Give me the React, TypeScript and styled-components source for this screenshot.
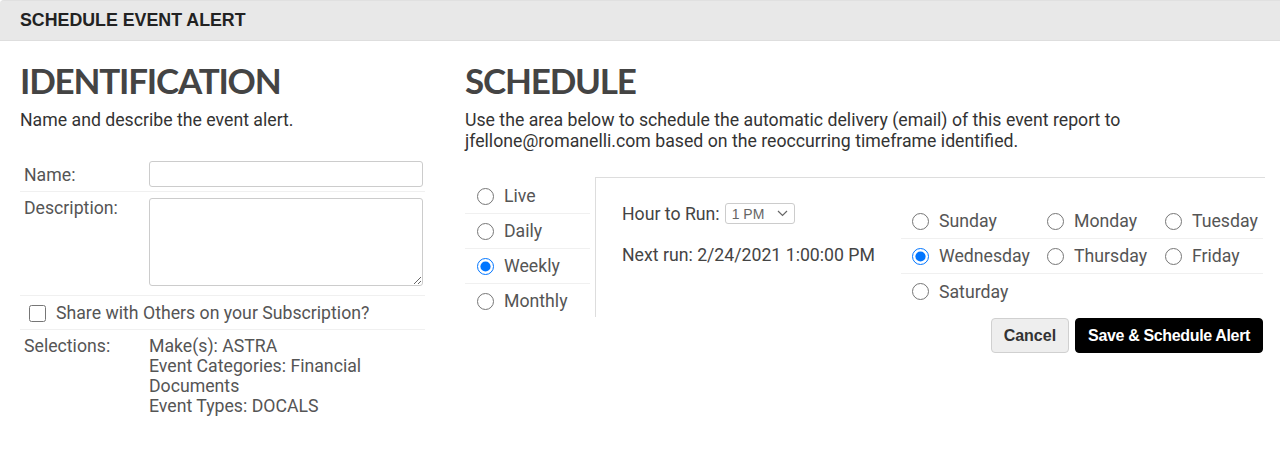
import styled, { createGlobalStyle } from "styled-components";

const GlobalStyle = createGlobalStyle`
  body {
    margin: 0;
    background: #fff;
    font-family: Roboto, "Liberation Sans", sans-serif;
    color: #444;
  }
`;

const TitleBar = styled.div`
  height: 41px;
  display: flex;
  align-items: center;
  padding-left: 20px;
  background: #e8e8e8;
  border-top: 1px solid #e0e0e0;
  border-bottom: 1px solid #dedede;
  border-radius: 4px 0 0 0;
  box-sizing: border-box;
  font-family: "Liberation Sans", Arial, sans-serif;
  font-weight: 700;
  font-size: 17.8px;
  color: #222;
`;

const Main = styled.div`
  display: flex;
  gap: 40px;
  padding: 0 15px 0 20px;
`;

const Column = styled.section<{ $width?: string }>`
  ${({ $width }) => ($width ? `width: ${$width};` : "flex: 1;")}
`;

const Heading = styled.h1`
  margin: 17px 0 0;
  font-family: Lato, "Open Sans", sans-serif;
  font-weight: 700;
  font-size: 35px;
  line-height: 44px;
  letter-spacing: -1.2px;
  color: #444;
`;

const Intro = styled.p`
  margin: 8px 0 0;
  font-size: 17.7px;
  line-height: 21px;
  color: #333;
`;

const FormTable = styled.div`
  margin-top: 26px;
`;

const FormRow = styled.div<{ $pad?: string }>`
  display: grid;
  grid-template-columns: 125px 1fr;
  padding: ${({ $pad }) => $pad ?? "4px 2px 4px 4px"};
  border-bottom: 1px solid #f0f0f0;
  font-size: 17.7px;
  line-height: 20px;
  color: #555;
  &:last-child {
    border-bottom: none;
  }
`;

const RowLabel = styled.div<{ $top?: number }>`
  padding-top: ${({ $top }) => $top ?? 0}px;
`;

const TextInput = styled.input`
  box-sizing: border-box;
  width: 100%;
  height: 26px;
  border: 1px solid #ccc;
  border-radius: 3px;
`;

const TextArea = styled.textarea`
  box-sizing: border-box;
  display: block;
  width: 100%;
  height: 88px;
  border: 1px solid #ccc;
  border-radius: 3px;
  resize: vertical;
`;

const CheckLabel = styled.label`
  grid-column: 1 / -1;
  display: flex;
  align-items: center;
  gap: 10px;
  padding-left: 5px;
`;

const CheckBox = styled.input`
  width: 17px;
  height: 17px;
  margin: 0;
`;

const Selections = styled.div`
  display: flex;
  flex-direction: column;
`;

const ScheduleRow = styled.div`
  display: flex;
  gap: 5px;
  margin-top: 25px;
`;

const FrequencyList = styled.div`
  width: 125px;
  padding-top: 2px;
`;

const RadioRow = styled.label<{ $last?: boolean }>`
  display: flex;
  align-items: center;
  gap: 10px;
  height: 34px;
  padding-left: 12px;
  border-bottom: ${({ $last }) => ($last ? "none" : "1px solid #f0f0f0")};
  font-size: 17.7px;
  color: #555;
`;

const Radio = styled.input`
  width: 17px;
  height: 17px;
  margin: 0;
  accent-color: #0075ff;
`;

const Panel = styled.div`
  flex: 1;
  display: flex;
  height: 139px;
  border-top: 1px solid #ddd;
  border-left: 1px solid #ddd;
`;

const RunInfo = styled.div`
  width: 279px;
  padding: 25px 0 0 26px;
  display: flex;
  flex-direction: column;
  gap: 21px;
  font-size: 17.7px;
  line-height: 20px;
  color: #444;
`;

const HourLine = styled.div`
  display: flex;
  align-items: center;
  gap: 5px;
`;

const SelectBox = styled.div`
  position: relative;
  display: inline-flex;
  align-items: center;
  width: 70px;
  height: 21px;
  box-sizing: border-box;
  border: 1px solid #ccc;
  border-radius: 3px;
  padding-left: 6px;
  font-family: "Liberation Sans", Arial, sans-serif;
  font-size: 14px;
  color: #666;
  svg {
    position: absolute;
    right: 6px;
    top: 6px;
  }
`;

const DaysGrid = styled.div`
  flex: 1;
  padding-top: 26px;
  margin-right: 2px;
  display: grid;
  grid-template-columns: 135px 118px 1fr;
  grid-auto-rows: 35px;
  align-content: start;
`;

const DayCell = styled.label<{ $line?: boolean }>`
  display: flex;
  align-items: center;
  gap: 10px;
  padding-left: 11px;
  font-size: 17.7px;
  color: #555;
  border-bottom: ${({ $line }) => ($line ? "1px solid #f0f0f0" : "none")};
`;

const Actions = styled.div`
  display: flex;
  justify-content: flex-end;
  gap: 6px;
  padding-right: 2px;
`;

const Button = styled.button<{ $primary?: boolean }>`
  height: 35px;
  padding: 0 12px;
  border-radius: 4px;
  font-family: "Liberation Sans", Arial, sans-serif;
  font-weight: 700;
  font-size: 16px;
  letter-spacing: ${({ $primary }) => ($primary ? "-0.35px" : "0")};
  cursor: pointer;
  border: 1px solid ${({ $primary }) => ($primary ? "#000" : "#d0d0d0")};
  background: ${({ $primary }) => ($primary ? "#000" : "#eeeeee")};
  color: ${({ $primary }) => ($primary ? "#fff" : "#333")};
`;

const frequencies = ["Live", "Daily", "Weekly", "Monthly"];
const days = [
  "Sunday",
  "Monday",
  "Tuesday",
  "Wednesday",
  "Thursday",
  "Friday",
  "Saturday",
];

export default function App() {
  return (
    <>
      <GlobalStyle />
      <TitleBar>SCHEDULE EVENT ALERT</TitleBar>
      <Main>
        <Column $width="405px">
          <Heading>IDENTIFICATION</Heading>
          <Intro>Name and describe the event alert.</Intro>
          <FormTable>
            <FormRow>
              <RowLabel $top={4}>Name:</RowLabel>
              <TextInput type="text" />
            </FormRow>
            <FormRow $pad="6px 2px 9px 4px">
              <RowLabel>Description:</RowLabel>
              <TextArea />
            </FormRow>
            <FormRow $pad="7px 2px 6px 4px">
              <CheckLabel>
                <CheckBox type="checkbox" />
                Share with Others on your Subscription?
              </CheckLabel>
            </FormRow>
            <FormRow $pad="6px 2px 6px 4px">
              <RowLabel>Selections:</RowLabel>
              <Selections>
                <span>Make(s): ASTRA</span>
                <span>Event Categories: Financial Documents</span>
                <span>Event Types: DOCALS</span>
              </Selections>
            </FormRow>
          </FormTable>
        </Column>
        <Column>
          <Heading>SCHEDULE</Heading>
          <Intro>
            Use the area below to schedule the automatic delivery (email) of
            this event report to
            <br />
            jfellone@romanelli.com based on the reoccurring timeframe
            identified.
          </Intro>
          <ScheduleRow>
            <FrequencyList>
              {frequencies.map((f, i) => (
                <RadioRow key={f} $last={i === frequencies.length - 1}>
                  <Radio
                    type="radio"
                    name="freq"
                    defaultChecked={f === "Weekly"}
                  />
                  {f}
                </RadioRow>
              ))}
            </FrequencyList>
            <Panel>
              <RunInfo>
                <HourLine>
                  Hour to Run:
                  <SelectBox>
                    1 PM
                    <svg width="11" height="7" viewBox="0 0 11 7">
                      <path
                        d="M1 1l4.5 4.5L10 1"
                        fill="none"
                        stroke="#666"
                        strokeWidth="1.2"
                      />
                    </svg>
                  </SelectBox>
                </HourLine>
                <div>Next run: 2/24/2021 1:00:00 PM</div>
              </RunInfo>
              <DaysGrid>
                {days.map((d, i) => (
                  <DayCell key={d} $line={i < 6}>
                    <Radio
                      type="radio"
                      name="day"
                      defaultChecked={d === "Wednesday"}
                    />
                    {d}
                  </DayCell>
                ))}
              </DaysGrid>
            </Panel>
          </ScheduleRow>
          <Actions>
            <Button>Cancel</Button>
            <Button $primary>Save &amp; Schedule Alert</Button>
          </Actions>
        </Column>
      </Main>
    </>
  );
}
